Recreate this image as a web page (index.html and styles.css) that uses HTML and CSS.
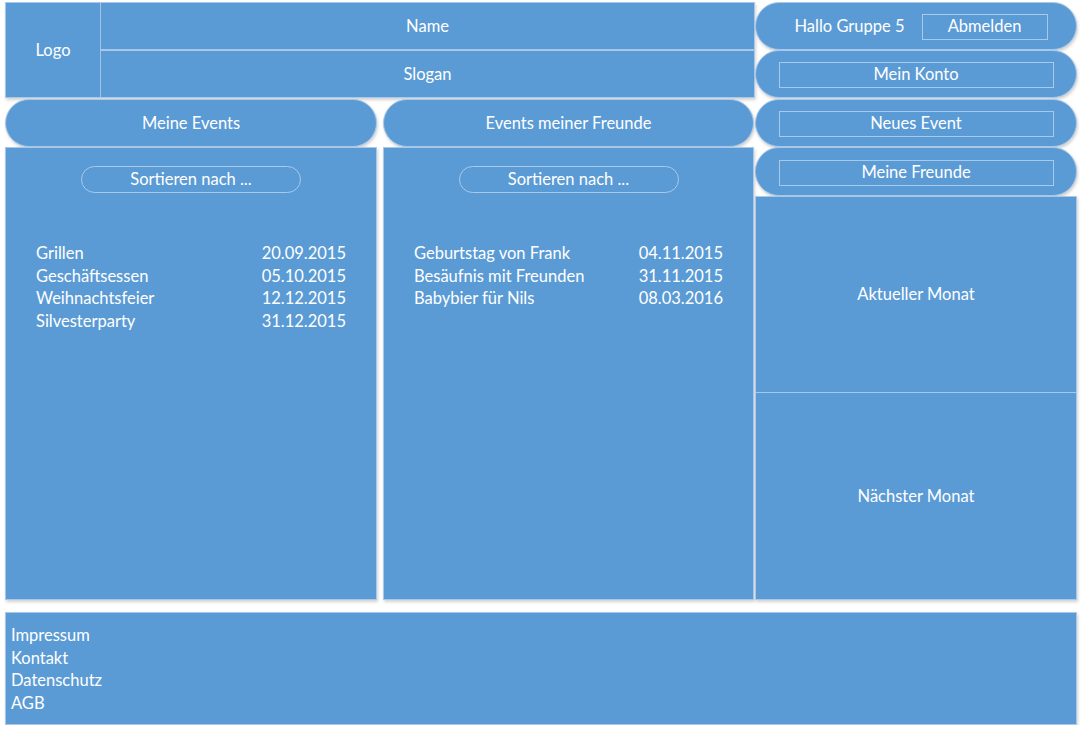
FILE: index.html
```html
<!DOCTYPE html>
<html lang="de">
<head>
<meta charset="UTF-8" />
<title>Event Planer - Startseite</title>
<link rel="stylesheet" href="styles.css">
</head>
<body>
<div class="page">
  <!-- Kopfbereich -->
  <div class="shape logo">Logo</div>
  <div class="shape name">Name</div>
  <div class="shape slogan">Slogan</div>

  <!-- Benutzermenü -->
  <div class="shape pill user">
    <span>Hallo Gruppe 5</span>
    <span class="btn small">Abmelden</span>
  </div>
  <div class="shape pill menu konto"><span class="btn wide">Mein Konto</span></div>
  <div class="shape pill menu neu"><span class="btn wide">Neues Event</span></div>
  <div class="shape pill menu freunde"><span class="btn wide">Meine Freunde</span></div>

  <!-- Überschriften -->
  <div class="shape pill title mine-title">Meine Events</div>
  <div class="shape pill title friends-title">Events meiner Freunde</div>

  <!-- Eventlisten -->
  <div class="shape panel mine">
    <div class="sort">Sortieren nach ...</div>
    <ul class="events">
      <li><span>Grillen</span><span>20.09.2015</span></li>
      <li><span>Geschäftsessen</span><span>05.10.2015</span></li>
      <li><span>Weihnachtsfeier</span><span>12.12.2015</span></li>
      <li><span>Silvesterparty</span><span>31.12.2015</span></li>
    </ul>
  </div>
  <div class="shape panel friends">
    <div class="sort">Sortieren nach ...</div>
    <ul class="events">
      <li><span>Geburtstag von Frank</span><span>04.11.2015</span></li>
      <li><span>Besäufnis mit Freunden</span><span>31.11.2015</span></li>
      <li><span>Babybier für Nils</span><span>08.03.2016</span></li>
    </ul>
  </div>

  <!-- Kalender -->
  <div class="shape month current">Aktueller Monat</div>
  <div class="shape month next">Nächster Monat</div>
</div>

<!-- Fußzeile -->
<div class="shape footer">
  <div>Impressum</div>
  <div>Kontakt</div>
  <div>Datenschutz</div>
  <div>AGB</div>
</div>
</body>
</html>
```

FILE: styles.css
```css
body {
  margin: 0;
  padding: 2px 7px 0 5px;
  background: #ffffff;
  font-family: Lato, "Open Sans", sans-serif;
  font-size: 16.5px;
  color: #ffffff;
}
.page {
  display: grid;
  grid-template-columns: 96px 276px 6px 372px 322px;
  grid-template-rows: 48px 48px 49px 49px 197px 207px;
  width: 1072px;
}
/* Gemeinsamer Stil der Formen */
.shape {
  box-sizing: border-box;
  background: #5b9bd5;
  border: 1px solid #a9c9ea;
  box-shadow: 1px 2px 3px rgba(0, 0, 0, 0.18);
  display: flex;
  align-items: center;
  justify-content: center;
  padding-bottom: 1px;
}
.pill {
  border-radius: 24px;
}

/* Kopf */
.logo { grid-column: 1; grid-row: 1 / 3; }
.name { grid-column: 2 / 5; grid-row: 1; border-left: none; }
.slogan { grid-column: 2 / 5; grid-row: 2; border-left: none; }

/* Menü rechts */
.user { grid-column: 5; grid-row: 1; gap: 17px; padding-left: 10px; }
.konto { grid-column: 5; grid-row: 2; }
.neu { grid-column: 5; grid-row: 3; margin-top: 1px; }
.freunde { grid-column: 5; grid-row: 4; }
.btn {
  box-sizing: border-box;
  height: 26px;
  border: 1px solid #a9c9ea;
  display: flex;
  align-items: center;
  justify-content: center;
  padding-bottom: 2px;
}
.user .btn { margin-top: 3px; }
.menu .btn { margin-top: 3px; }
.small { width: 126px; }
.wide { width: 275px; }

/* Überschriften */
.mine-title { grid-column: 1 / 3; grid-row: 3; margin-top: 1px; }
.friends-title { grid-column: 4; grid-row: 3; margin-top: 1px; margin-right: 1px; }

/* Listen */
.panel {
  flex-direction: column;
  align-items: stretch;
  justify-content: flex-start;
  padding: 18px 30px 0 30px;
}
.mine { grid-column: 1 / 3; grid-row: 4 / 7; }
.friends { grid-column: 4; grid-row: 4 / 7; margin-right: 1px; }
.sort {
  align-self: center;
  box-sizing: border-box;
  width: 220px;
  height: 27px;
  border: 1px solid #a9c9ea;
  border-radius: 14px;
  display: flex;
  align-items: center;
  justify-content: center;
  padding-bottom: 2px;
}
.events {
  list-style: none;
  margin: 49px 0 0 0;
  padding: 0;
}
.events li {
  display: flex;
  justify-content: space-between;
  line-height: 22.5px;
}

/* Kalender */
.current { grid-column: 5; grid-row: 5; }
.next { grid-column: 5; grid-row: 6; border-top: none; }

/* Fußzeile */
.footer {
  margin-top: 12px;
  width: 1072px;
  height: 113px;
  flex-direction: column;
  align-items: flex-start;
  justify-content: flex-start;
  padding: 11px 5px;
  line-height: 22.5px;
}
```
